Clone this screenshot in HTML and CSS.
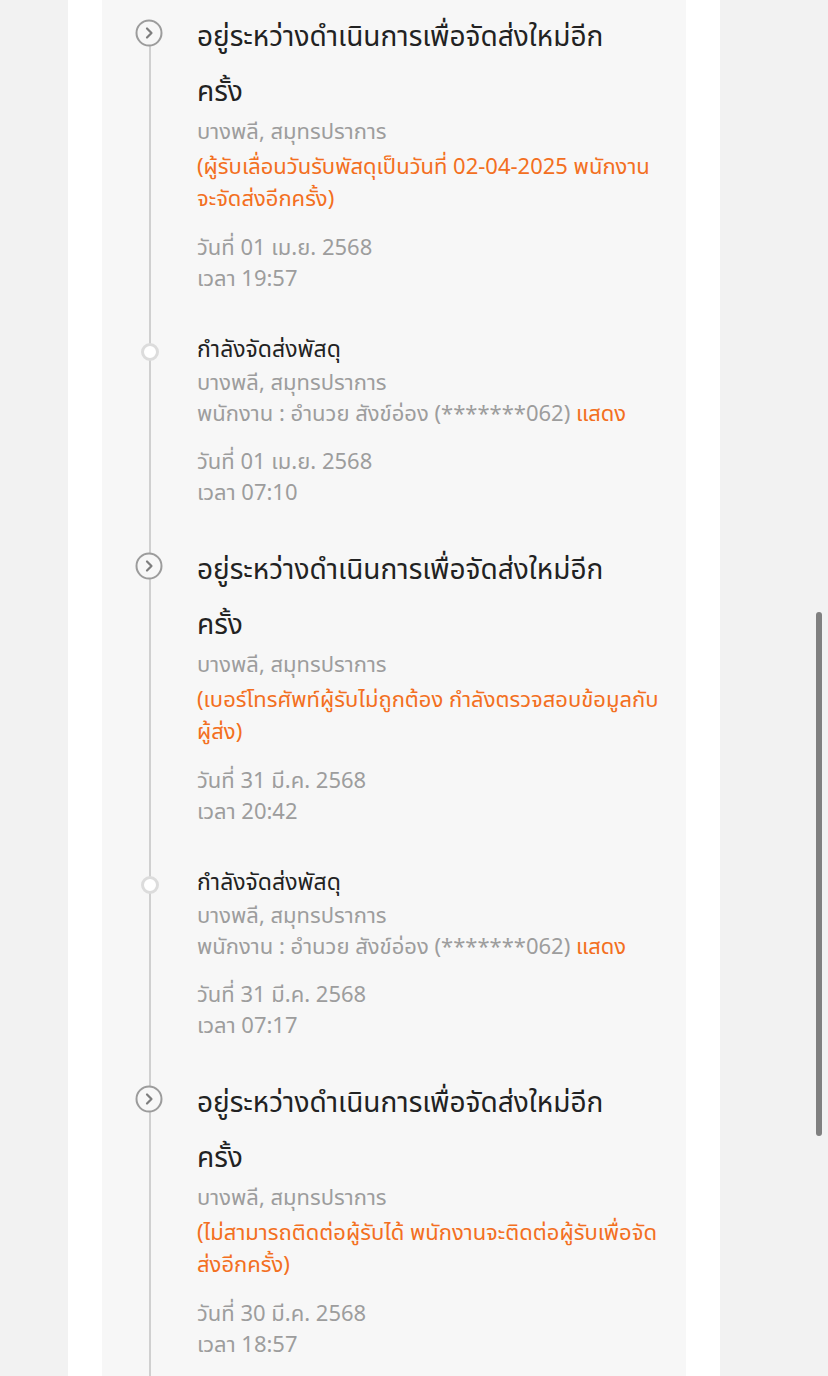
FILE: index.html
```html
<!DOCTYPE html>
<html lang="th">
<head>
  <meta charset="UTF-8" />
  <title>สถานะพัสดุ</title>
  <meta name="viewport" content="width=device-width, initial-scale=1.0" />
  <link rel="stylesheet" href="styles.css">
</head>
<body>
  <div class="page">
    <div class="sheet">
      <ul class="timeline">
        <li class="event major">
          <div class="marker">
            <svg class="icon-retry" viewBox="0 0 28 28" width="28" height="28">
              <circle cx="14" cy="14" r="12.5" fill="#f7f7f7" stroke="#9c9c9c" stroke-width="2"/>
              <path d="M12 9.5 L16.5 14 L12 18.5" fill="none" stroke="#7d7d7d" stroke-width="2.2" stroke-linecap="round" stroke-linejoin="round"/>
            </svg>
          </div>
          <div class="detail">
            <p class="title">อยู่ระหว่างดำเนินการเพื่อจัดส่งใหม่อีก<br>ครั้ง</p>
            <p class="place">บางพลี, สมุทรปราการ</p>
            <p class="note">(ผู้รับเลื่อนวันรับพัสดุเป็นวันที่ 02-04-2025 พนักงาน<br>จะจัดส่งอีกครั้ง)</p>
            <p class="when">วันที่ 01 เม.ย. 2568<br>เวลา 19:57</p>
          </div>
        </li>
        <li class="event">
          <div class="marker"><span class="dot"></span></div>
          <div class="detail">
            <p class="title">กำลังจัดส่งพัสดุ</p>
            <p class="place">บางพลี, สมุทรปราการ<br>พนักงาน : อำนวย สังข์อ่อง (*******062) <a class="show" href="#">แสดง</a></p>
            <p class="when">วันที่ 01 เม.ย. 2568<br>เวลา 07:10</p>
          </div>
        </li>
        <li class="event major">
          <div class="marker">
            <svg class="icon-retry" viewBox="0 0 28 28" width="28" height="28">
              <circle cx="14" cy="14" r="12.5" fill="#f7f7f7" stroke="#9c9c9c" stroke-width="2"/>
              <path d="M12 9.5 L16.5 14 L12 18.5" fill="none" stroke="#7d7d7d" stroke-width="2.2" stroke-linecap="round" stroke-linejoin="round"/>
            </svg>
          </div>
          <div class="detail">
            <p class="title">อยู่ระหว่างดำเนินการเพื่อจัดส่งใหม่อีก<br>ครั้ง</p>
            <p class="place">บางพลี, สมุทรปราการ</p>
            <p class="note">(เบอร์โทรศัพท์ผู้รับไม่ถูกต้อง กำลังตรวจสอบข้อมูลกับ<br>ผู้ส่ง)</p>
            <p class="when">วันที่ 31 มี.ค. 2568<br>เวลา 20:42</p>
          </div>
        </li>
        <li class="event">
          <div class="marker"><span class="dot"></span></div>
          <div class="detail">
            <p class="title">กำลังจัดส่งพัสดุ</p>
            <p class="place">บางพลี, สมุทรปราการ<br>พนักงาน : อำนวย สังข์อ่อง (*******062) <a class="show" href="#">แสดง</a></p>
            <p class="when">วันที่ 31 มี.ค. 2568<br>เวลา 07:17</p>
          </div>
        </li>
        <li class="event major">
          <div class="marker">
            <svg class="icon-retry" viewBox="0 0 28 28" width="28" height="28">
              <circle cx="14" cy="14" r="12.5" fill="#f7f7f7" stroke="#9c9c9c" stroke-width="2"/>
              <path d="M12 9.5 L16.5 14 L12 18.5" fill="none" stroke="#7d7d7d" stroke-width="2.2" stroke-linecap="round" stroke-linejoin="round"/>
            </svg>
          </div>
          <div class="detail">
            <p class="title">อยู่ระหว่างดำเนินการเพื่อจัดส่งใหม่อีก<br>ครั้ง</p>
            <p class="place">บางพลี, สมุทรปราการ</p>
            <p class="note">(ไม่สามารถติดต่อผู้รับได้ พนักงานจะติดต่อผู้รับเพื่อจัด<br>ส่งอีกครั้ง)</p>
            <p class="when">วันที่ 30 มี.ค. 2568<br>เวลา 18:57</p>
          </div>
        </li>
      </ul>
    </div>
  </div>
  <div class="scrollbar"></div>
</body>
</html>
```

FILE: styles.css
```css
body {
  margin: 0;
  background: #f2f2f2;
  font-family: "Noto Sans Thai", "Noto Sans", sans-serif;
  color: #222;
}
.page {
  width: 652px;
  margin-left: 68px;
  background: #fff;
  padding: 0 34px;
  box-sizing: border-box;
  min-height: 1376px;
}
.sheet {
  background: #f7f7f7;
  min-height: 1376px;
}
.timeline {
  list-style: none;
  margin: 0;
  padding: 17px 0 0;
  position: relative;
}
.timeline::before {
  content: "";
  position: absolute;
  left: 47px;
  top: 33px;
  bottom: 0;
  width: 2px;
  background: #d0d0d0;
}
.event {
  display: grid;
  grid-template-columns: 95px 1fr;
  padding-bottom: 41px;
}
.marker {
  display: flex;
  justify-content: center;
  align-items: flex-start;
  position: relative;
}
.icon-retry {
  margin-top: 2px;
  margin-left: -1px;
}
.dot {
  width: 12px;
  height: 12px;
  border: 3px solid #dcdcdc;
  border-radius: 50%;
  background: #fff;
  margin-top: 7px;
}
.detail p {
  margin: 0;
}
.title {
  font-size: 23px;
  line-height: 33px;
  margin: -2px 0 1px !important;
}
.major .title {
  font-size: 28px;
  line-height: 55px;
  margin: -7px 0 -3px !important;
}
.place {
  font-size: 22px;
  line-height: 31px;
  color: #9d9d9d;
}
.note {
  font-size: 22px;
  line-height: 32px;
  color: #f36f21;
  margin-top: 4px !important;
}
.when {
  font-size: 22px;
  line-height: 30.5px;
  color: #9d9d9d;
  margin-top: 18px !important;
}
.show {
  color: #f36f21;
  text-decoration: none;
}
.scrollbar {
  position: fixed;
  right: 6px;
  top: 612px;
  width: 6px;
  height: 524px;
  border-radius: 3px;
  background: #808080;
}
```
